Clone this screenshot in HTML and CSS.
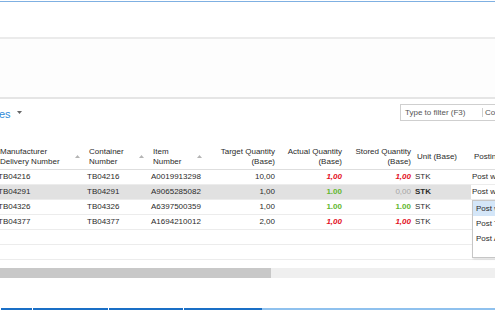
FILE: index.html
```html
<!DOCTYPE html>
<html lang="en">
<head>
    <meta charset="UTF-8">
    <title>Container Lines</title>
    <link rel="stylesheet" href="styles.css">
</head>
<body>
    <div class="app">
        <div class="titlebar"></div>
        <div class="ribbon"></div>

        <div class="page">
            <div class="toolbar">
                <div class="page-title">
                    <span class="title-text">es</span>
                    <svg class="caret" width="5" height="3" viewBox="0 0 5 3"><polygon points="0,0 5,0 2.5,3" fill="#666"/></svg>
                </div>
                <div class="filter">
                    <span class="filter-text">Type to filter (F3)</span>
                    <span class="filter-field">Co</span>
                </div>
            </div>

            <div class="grid">
                <table class="lines">
                    <colgroup>
                        <col style="width: 89px">
                        <col style="width: 64px">
                        <col style="width: 58px">
                        <col style="width: 70px">
                        <col style="width: 67px">
                        <col style="width: 69px">
                        <col style="width: 57px">
                        <col style="width: 70px">
                    </colgroup>
                    <thead>
                        <tr>
                            <th><div class="sortable"><span>Manufacturer<br>Delivery Number</span><svg class="sort" width="5" height="3" viewBox="0 0 5 3"><polygon points="2.5,0 5,3 0,3" fill="#b4b4b4"/></svg></div></th>
                            <th><div class="sortable"><span>Container<br>Number</span><svg class="sort" width="5" height="3" viewBox="0 0 5 3"><polygon points="2.5,0 5,3 0,3" fill="#b4b4b4"/></svg></div></th>
                            <th><div class="sortable"><span>Item<br>Number</span><svg class="sort" width="5" height="3" viewBox="0 0 5 3"><polygon points="2.5,0 5,3 0,3" fill="#b4b4b4"/></svg></div></th>
                            <th class="num">Target Quantity<br>(Base)</th>
                            <th class="num">Actual Quantity<br>(Base)</th>
                            <th class="num">Stored Quantity<br>(Base)</th>
                            <th>Unit (Base)</th>
                            <th>Posting</th>
                        </tr>
                    </thead>
                    <tbody>
                        <tr>
                            <td>TB04216</td>
                            <td>TB04216</td>
                            <td>A0019913298</td>
                            <td class="num">10,00</td>
                            <td class="num bad">1,00</td>
                            <td class="num bad">1,00</td>
                            <td>STK</td>
                            <td>Post with</td>
                        </tr>
                        <tr class="selected">
                            <td>TB04291</td>
                            <td>TB04291</td>
                            <td>A9065285082</td>
                            <td class="num">1,00</td>
                            <td class="num good">1.00</td>
                            <td class="num muted">0,00</td>
                            <td class="strong">STK</td>
                            <td class="editing">Post with</td>
                        </tr>
                        <tr>
                            <td>TB04326</td>
                            <td>TB04326</td>
                            <td>A6397500359</td>
                            <td class="num">1,00</td>
                            <td class="num good">1.00</td>
                            <td class="num good">1.00</td>
                            <td>STK</td>
                            <td></td>
                        </tr>
                        <tr>
                            <td>TB04377</td>
                            <td>TB04377</td>
                            <td>A1694210012</td>
                            <td class="num">2,00</td>
                            <td class="num bad">1,00</td>
                            <td class="num bad">1,00</td>
                            <td>STK</td>
                            <td></td>
                        </tr>
                        <tr class="empty"><td></td><td></td><td></td><td></td><td></td><td></td><td></td><td></td></tr>
                        <tr class="empty"><td></td><td></td><td></td><td></td><td></td><td></td><td></td><td></td></tr>
                    </tbody>
                </table>

                <div class="dropdown">
                    <div class="option active">Post with</div>
                    <div class="option">Post Transfer</div>
                    <div class="option">Post All</div>
                </div>
            </div>

            <div class="scrollbar"><div class="thumb"></div></div>
        </div>

        <div class="taskbar">
            <span class="task-a"></span>
            <span class="task-b"></span>
            <span class="task-c"></span>
            <span class="task-d"></span>
            <span class="task-rest"></span>
        </div>
    </div>
</body>
</html>
```

FILE: styles.css
```css
body {
    margin: 0;
    background: #fff;
    font-family: "Segoe UI", "Liberation Sans", Arial, sans-serif;
    font-size: 8px;
    color: #2b2b2b;
}
.app {
    width: 495px;
    height: 310px;
    overflow: hidden;
    padding-top: 1px;
    box-sizing: border-box;
}
.titlebar {
    height: 35px;
    border-top: 1px solid #7fb0e2;
    border-bottom: 2px solid #ebebeb;
}
.ribbon {
    height: 58px;
    background: #fdfdfd;
    border-bottom: 2px solid #e5e5e5;
}
.toolbar {
    display: flex;
    justify-content: space-between;
    align-items: center;
    height: 17px;
    padding-top: 5px;
}
.page-title {
    display: flex;
    align-items: center;
    gap: 6px;
    margin-left: -1px;
    margin-top: 2px;
}
.title-text {
    font-size: 11px;
    color: #2f8ad8;
}
.caret {
    margin-top: -2px;
}
.filter {
    display: flex;
    align-items: center;
    width: 104px;
    height: 17px;
    margin-right: -9px;
    border: 1px solid #cfcfcf;
    box-sizing: border-box;
    color: #555;
}
.filter-text {
    padding-left: 4px;
    width: 77px;
    border-right: 1px solid #cfcfcf;
    line-height: 9px;
}
.filter-field {
    padding-left: 2px;
}
.grid {
    position: relative;
    margin-top: 24px;
}
.lines {
    border-collapse: collapse;
    table-layout: fixed;
    margin-left: -3px;
    width: 544px;
}
.lines th {
    height: 24px;
    padding: 0 3px 0 3px;
    font-weight: normal;
    text-align: left;
    line-height: 10px;
    border-bottom: 1px solid #dedede;
    white-space: nowrap;
    vertical-align: middle;
}
.lines td {
    height: 14px;
    padding: 0 3px 0 1px;
    border-bottom: 1px solid #ececec;
    white-space: nowrap;
    overflow: hidden;
    line-height: 14px;
}
.lines .num {
    text-align: right;
}
.sortable {
    display: flex;
    justify-content: space-between;
    align-items: center;
    padding-right: 3px;
}
.sort {
    margin-top: -1px;
}
.selected td {
    background: #e1e1e1;
}
.selected td.editing {
    background: #fff;
}
.bad {
    color: #e3101e;
    font-weight: bold;
    font-style: italic;
}
.good {
    color: #63b72e;
    font-weight: bold;
}
.muted {
    color: #a6a6a6;
}
.strong {
    font-weight: bold;
}
.dropdown {
    position: absolute;
    left: 472px;
    top: 55px;
    width: 40px;
    height: 58px;
    background: #fff;
    border: 1px solid #c6c6c6;
    box-shadow: 1px 1px 2px rgba(0,0,0,0.15);
    box-sizing: border-box;
}
.option {
    height: 15px;
    line-height: 15px;
    padding-left: 3px;
    white-space: nowrap;
    overflow: hidden;
}
.option.active {
    background: #d4e6f8;
}
.scrollbar {
    margin-top: 8px;
    height: 10px;
    background: #efefef;
}
.thumb {
    width: 271px;
    height: 100%;
    background: #c8c8c8;
}
.taskbar {
    display: flex;
    height: 2px;
    margin-top: 30px;
}
.taskbar span {
    height: 2px;
    background: #1a6fc6;
    border-left: 1px solid #fff;
}
.task-a { width: 31px; }
.task-b { width: 75px; }
.task-c { width: 74px; }
.task-d { width: 78px; }
.task-rest {
    flex: 1;
    background: #8fc1ee !important;
    border-left: none !important;
}
```
